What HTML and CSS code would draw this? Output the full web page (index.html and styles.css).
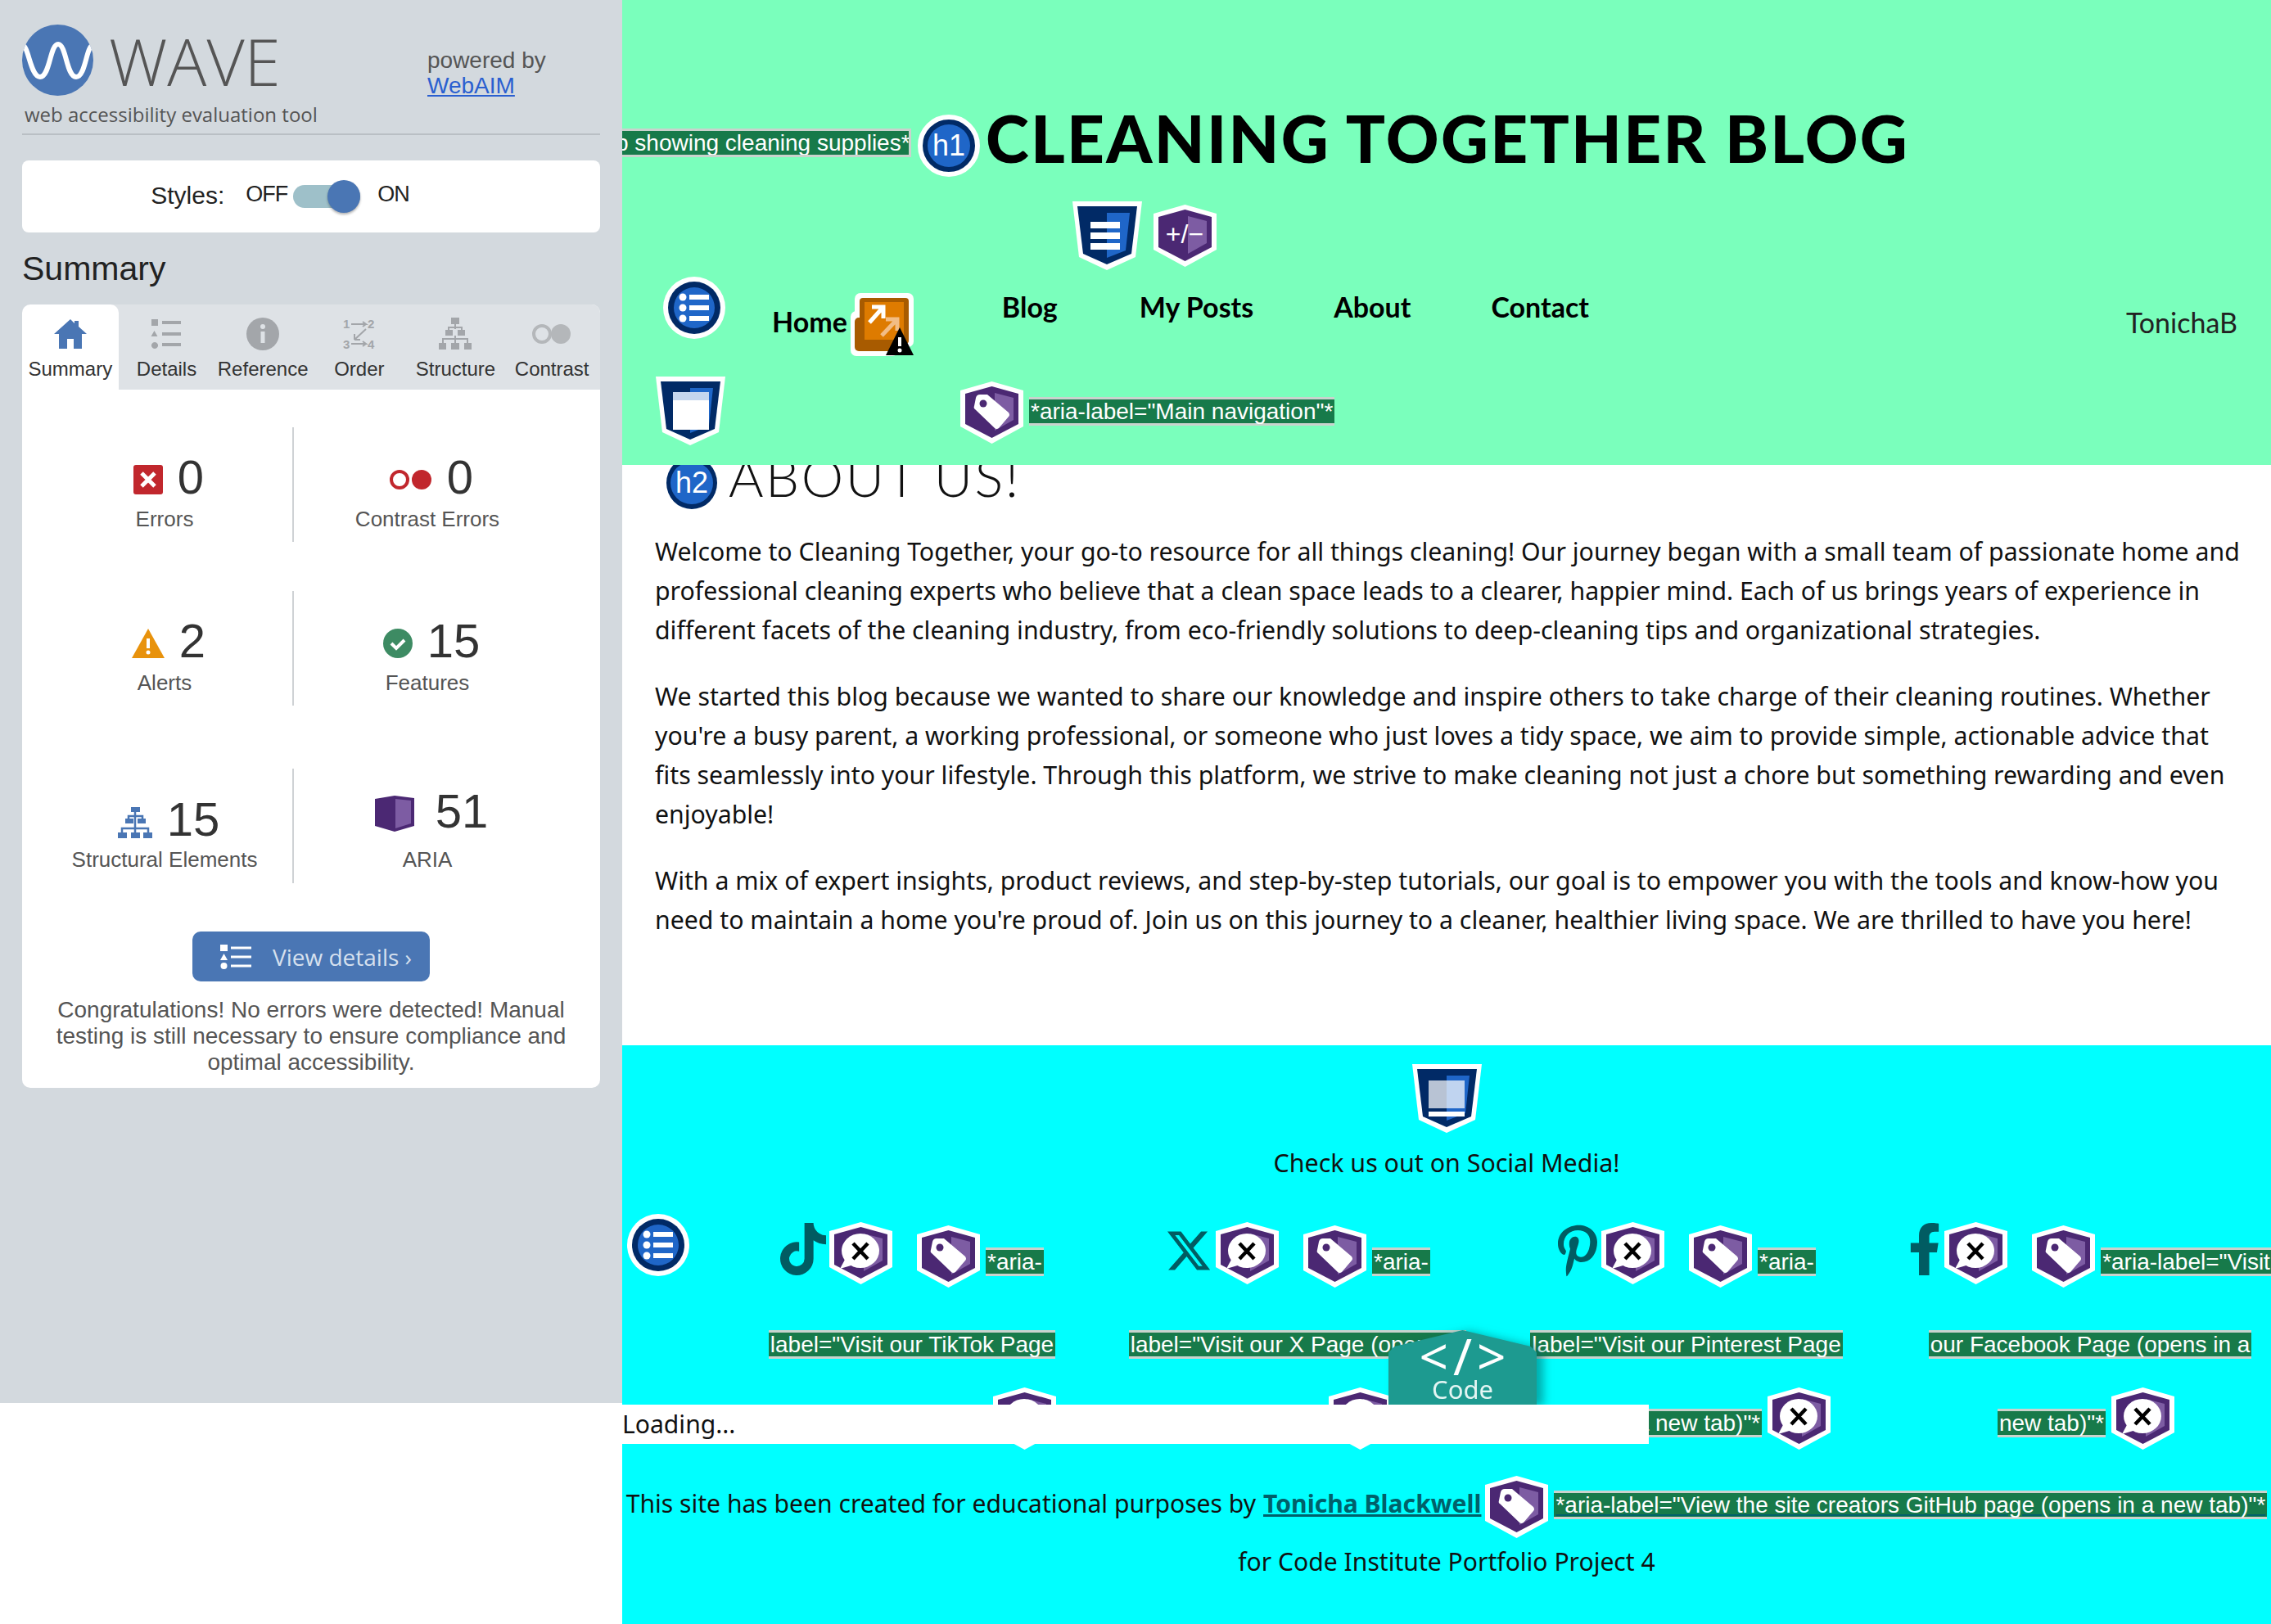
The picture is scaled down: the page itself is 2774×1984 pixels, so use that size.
FILE: index.html
```html
<!DOCTYPE html>
<html lang="en">
<head>
    <meta charset="UTF-8">
    <meta name="viewport" content="width=device-width, initial-scale=1.0">
    <title>About Us - Cleaning Together Blog</title>
    <link rel="stylesheet" href="styles.css">
</head>
<body>

    <!-- shared wave icons -->
    <svg class="icon-defs" aria-hidden="true">
        <symbol id="aria-base" viewBox="0 0 77 76">
            <polygon points="38.5,0 77,11 77,55 38.5,76 0,55 0,11" fill="#fff"/>
            <polygon points="38.5,6 71,15 71,52 38.5,69 6,52 6,15" fill="#4b2873"/>
            <polygon points="42,14 65,20 65,47 42,60" fill="#7d5ca3"/>
        </symbol>
        <symbol id="aria-bubble" viewBox="0 0 77 76">
            <use href="#aria-base"/>
            <ellipse cx="38" cy="35" rx="23" ry="21" fill="#fff"/>
            <polygon points="20,44 30,52 13,57" fill="#fff"/>
            <path d="M29 26l18 19M47 26L29 45" stroke="#000" stroke-width="4.5" fill="none"/>
        </symbol>
        <symbol id="aria-tag" viewBox="0 0 77 76">
            <use href="#aria-base"/>
            <path d="M19 20Q20 16 24 16H33L59 38Q61 41 59 43L47 57Q44 59 42 57L18 34Q16 33 17 30Z" fill="#fff"/>
            <circle cx="28" cy="27" r="4.500" fill="#4b2873"/>
        </symbol>
        <symbol id="list-circle" viewBox="0 0 76 76">
            <circle cx="38" cy="38" r="38" fill="#fff"/>
            <circle cx="38" cy="38" r="32" fill="#012a66"/>
            <circle cx="38" cy="38" r="25" fill="#1f66c8"/>
            <circle cx="24" cy="25" r="4.5" fill="#fff"/>
            <circle cx="24" cy="38" r="4.5" fill="#fff"/>
            <circle cx="24" cy="51" r="4.5" fill="#fff"/>
            <path d="M32 25h24M32 38h24M32 51h24" stroke="#fff" stroke-width="6"/>
        </symbol>
        <symbol id="region-base" viewBox="0 0 85 84">
            <polygon points="0,0 85,0 77,68 42,84 8,68" fill="#fff"/>
            <polygon points="6,6 79,6 72,64 42,77 13,64" fill="#012a66"/>
            <polygon points="42,14 70,14 65,60 42,69" fill="#1f66c8"/>
        </symbol>
    </svg>

    <div class="page">
        <aside class="wave-panel">
            <div class="wave-brand">
                <div class="wave-logo">
                    <svg class="wave-mark" viewBox="0 0 87 87">
                        <defs><clipPath id="logo-clip"><circle cx="43.500" cy="43.500" r="43.500"/></clipPath></defs>
                        <circle cx="43.500" cy="43.500" r="43.500" fill="#4a76b4"/>
                        <path clip-path="url(#logo-clip)" d="M0 25C8 25 10 64 22 64S34 24 44 24 54 64 66 64 78 25 87 25" stroke="#fff" stroke-width="6" fill="none"/>
                    </svg>
                    <span class="wave-name">WAVE</span>
                </div>
                <div class="wave-powered">powered by<br><a href="#">WebAIM</a></div>
            </div>
            <div class="wave-tagline">web accessibility evaluation tool</div>

            <div class="styles-card">
                <span class="styles-label">Styles:</span>
                <span class="styles-state">OFF</span>
                <span class="toggle"><span class="toggle-thumb"></span></span>
                <span class="styles-state">ON</span>
            </div>

            <h2 class="wave-heading">Summary</h2>

            <div class="summary-card">
                <div class="tabs">
                    <div class="tab tab-active">
                        <svg class="tab-icon" viewBox="0 0 40 40"><path d="M20 2L0 20h6v18h10V26h8v12h10V20h6L30 11V4h-5v3z" fill="#4a76b4"/></svg>
                        Summary
                    </div>
                    <div class="tab">
                        <svg class="tab-icon" viewBox="0 0 40 40"><path d="M2 2h8v8H2zM5.500 16l4 7h-8zM6 30a4 4 0 1 1-.01 0z" fill="#a3a6aa"/><path d="M15 6h23M15 20h23M15 33h23" stroke="#a3a6aa" stroke-width="4"/></svg>
                        Details
                    </div>
                    <div class="tab">
                        <svg class="tab-icon" viewBox="0 0 40 40"><circle cx="20" cy="20" r="20" fill="#a3a6aa"/><circle cx="20" cy="11" r="3" fill="#dee2e6"/><path d="M20 17v14" stroke="#dee2e6" stroke-width="5"/></svg>
                        Reference
                    </div>
                    <div class="tab">
                        <svg class="tab-icon" viewBox="0 0 40 40">
                            <text x="0" y="13" class="order-num">1</text>
                            <text x="30" y="13" class="order-num">2</text>
                            <text x="0" y="38" class="order-num">3</text>
                            <text x="30" y="38" class="order-num">4</text>
                            <path d="M10 8h18l-4-3M28 8l-4 3M10 32h18l-4-3M28 32l-4 3M28 14L14 27M14 27v-7M14 27h7" stroke="#a3a6aa" stroke-width="2" fill="none"/>
                        </svg>
                        Order
                    </div>
                    <div class="tab">
                        <svg class="tab-icon" viewBox="0 0 40 40"><path d="M15 0h10v8H15zM8 15h9v7H8zM23 15h9v7h-9zM0 31h9v8H0zM15 31h10v8H15zM31 31h9v8h-9z" fill="#a3a6aa"/><path d="M20 8v6M5 31v-5h30v5M20 22v9M12 15v-3h16v3" stroke="#a3a6aa" stroke-width="2" fill="none"/></svg>
                        Structure
                    </div>
                    <div class="tab">
                        <svg class="tab-icon tab-icon-wide" viewBox="0 0 50 40"><circle cx="13" cy="20" r="10" fill="none" stroke="#b4b7ba" stroke-width="4"/><circle cx="36" cy="20" r="12" fill="#b4b7ba"/></svg>
                        Contrast
                    </div>
                </div>

                <div class="stats">
                    <div class="stat stat-first">
                        <div class="stat-line">
                            <svg class="stat-icon" viewBox="0 0 36 36"><rect width="36" height="36" rx="3" fill="#c1272d"/><path d="M10 10l16 16M26 10L10 26" stroke="#fff" stroke-width="5"/></svg>
                            <span class="stat-num">0</span>
                        </div>
                        <div class="stat-label">Errors</div>
                    </div>
                    <div class="stat stat-first">
                        <div class="stat-line">
                            <svg class="stat-icon stat-icon-pair" viewBox="0 0 52 28"><circle cx="12" cy="14" r="10" fill="none" stroke="#c1272d" stroke-width="4"/><circle cx="39" cy="14" r="12" fill="#c1272d"/></svg>
                            <span class="stat-num">0</span>
                        </div>
                        <div class="stat-label">Contrast Errors</div>
                    </div>
                    <div class="stat stat-second">
                        <div class="stat-line">
                            <svg class="stat-icon stat-icon-alert" viewBox="0 0 40 36"><polygon points="20,0 40,36 0,36" fill="#e8920c"/><path d="M20 12v12" stroke="#fff" stroke-width="4"/><circle cx="20" cy="29" r="2.500" fill="#fff"/></svg>
                            <span class="stat-num">2</span>
                        </div>
                        <div class="stat-label">Alerts</div>
                    </div>
                    <div class="stat stat-second">
                        <div class="stat-line">
                            <svg class="stat-icon" viewBox="0 0 36 36"><circle cx="18" cy="18" r="18" fill="#3d8b63"/><path d="M10 18l6 6 10-10" stroke="#fff" stroke-width="4" fill="none"/></svg>
                            <span class="stat-num">15</span>
                        </div>
                        <div class="stat-label">Features</div>
                    </div>
                    <div class="stat stat-third">
                        <div class="stat-line stat-line-low">
                            <svg class="stat-icon stat-icon-tree" viewBox="0 0 42 38"><path d="M16 0h11v6H16zM9 14h10v6H9zM24 14h10v6H24zM0 31h11v7H0zM16 31h11v7H16zM31 31h11v7H31z" fill="#4a76b4"/><path d="M21 6v25M5 31v-5h32v5M13 14v-3h17v3" stroke="#4a76b4" stroke-width="2.500" fill="none"/></svg>
                            <span class="stat-num">15</span>
                        </div>
                        <div class="stat-label">Structural Elements</div>
                    </div>
                    <div class="stat stat-third">
                        <div class="stat-line">
                            <svg class="stat-icon stat-icon-box" viewBox="0 0 48 44"><polygon points="0,4 24,0 48,3 48,37 24,44 0,37" fill="#4b2873"/><polygon points="25,4 44,6 44,34 25,40" fill="#7d5ca3"/></svg>
                            <span class="stat-num">51</span>
                        </div>
                        <div class="stat-label">ARIA</div>
                    </div>
                </div>

                <a class="view-details" href="#">
                    <svg class="view-icon" viewBox="0 0 38 30"><rect width="9" height="8" fill="#fff"/><polygon points="4.500,11 9,19 0,19" fill="#fff"/><circle cx="4.500" cy="26" r="4" fill="#fff"/><path d="M13 4h25M13 15h25M13 26h25" stroke="#fff" stroke-width="3"/></svg>
                    View details ›
                </a>
                <p class="summary-note">Congratulations! No errors were detected! Manual testing is still necessary to ensure compliance and optimal accessibility.</p>
            </div>
        </aside>

        <main class="site">
            <header class="site-header">
                <div class="title-row">
                    <span class="tag tag-alt"><span>p showing cleaning supplies*</span></span>
                    <span class="heading-badge title-badge"><span>h1</span></span>
                    <h1 class="site-title">CLEANING TOGETHER BLOG</h1>
                </div>

                <div class="region-row">
                    <svg class="region-icon" viewBox="0 0 85 84">
                        <use href="#region-base"/>
                        <path d="M22 29h36M22 42h36M22 55h36" stroke="#fff" stroke-width="8"/>
                    </svg>
                    <svg class="aria-icon aria-plus" viewBox="0 0 77 76">
                        <use href="#aria-base"/>
                        <text x="38" y="47" class="plus-text">+/−</text>
                    </svg>
                </div>

                <nav class="main-nav">
                    <svg class="list-icon" viewBox="0 0 76 76"><use href="#list-circle"/></svg>
                    <div class="nav-home">
                        <a class="nav-link nav-link-home" href="#">Home</a>
                        <svg class="link-icon" viewBox="0 0 77 77">
                            <rect x="5" width="72" height="66" rx="7" fill="#fff"/>
                            <rect y="22" width="58" height="55" rx="7" fill="#fff"/>
                            <rect x="5" y="30" width="48" height="41" rx="5" fill="#a85b00"/>
                            <rect x="11" y="6" width="60" height="56" rx="4" fill="#a85b00"/>
                            <rect x="17" y="11" width="48" height="46" fill="#de7b00"/>
                            <path d="M23 36l17-19M26 17h14v14" stroke="#fff" stroke-width="5" fill="none"/>
                            <path d="M38 52l19-20M43 32h14v14" stroke="#f2bd85" stroke-width="5" fill="none"/>
                            <polygon points="60,42 77,76 43,76" fill="#000"/>
                            <path d="M60 54v11" stroke="#fff" stroke-width="4"/>
                            <circle cx="60" cy="70" r="2.500" fill="#fff"/>
                        </svg>
                    </div>
                    <a class="nav-link nav-link-blog" href="#">Blog</a>
                    <a class="nav-link nav-link-posts" href="#">My Posts</a>
                    <a class="nav-link nav-link-about" href="#">About</a>
                    <a class="nav-link nav-link-contact" href="#">Contact</a>
                    <span class="nav-user">TonichaB</span>
                </nav>

                <div class="nav-labels">
                    <svg class="region-icon" viewBox="0 0 85 84">
                        <use href="#region-base"/>
                        <rect x="21" y="19" width="44" height="10" fill="#c5d6ee"/>
                        <rect x="21" y="29" width="44" height="36" fill="#fff"/>
                    </svg>
                    <svg class="aria-icon aria-nav" viewBox="0 0 77 76"><use href="#aria-tag"/></svg>
                    <span class="tag tag-nav">*aria-label="Main navigation"*</span>
                </div>
            </header>

            <section class="about">
                <div class="about-heading">
                    <span class="heading-badge about-badge"><span>h2</span></span>
                    <h2 class="about-title">ABOUT US!</h2>
                </div>
                <p>Welcome to Cleaning Together, your go-to resource for all things cleaning! Our journey began with a small team of passionate home and professional cleaning experts who believe that a clean space leads to a clearer, happier mind. Each of us brings years of experience in different facets of the cleaning industry, from eco-friendly solutions to deep-cleaning tips and organizational strategies.</p>
                <p>We started this blog because we wanted to share our knowledge and inspire others to take charge of their cleaning routines. Whether you're a busy parent, a working professional, or someone who just loves a tidy space, we aim to provide simple, actionable advice that fits seamlessly into your lifestyle. Through this platform, we strive to make cleaning not just a chore but something rewarding and even enjoyable!</p>
                <p>With a mix of expert insights, product reviews, and step-by-step tutorials, our goal is to empower you with the tools and know-how you need to maintain a home you're proud of. Join us on this journey to a cleaner, healthier living space. We are thrilled to have you here!</p>
            </section>

            <footer class="site-footer">
                <svg class="region-icon footer-region" viewBox="0 0 85 84">
                    <use href="#region-base"/>
                    <rect x="20" y="20" width="44" height="34" fill="#fff" opacity="0.72"/>
                    <rect x="20" y="58" width="44" height="6" fill="#fff"/>
                </svg>
                <p class="social-intro">Check us out on Social Media!</p>

                <div class="social-grid">
                    <svg class="list-icon social-list" viewBox="0 0 76 76"><use href="#list-circle"/></svg>

                    <div class="social-col">
                        <div class="social-top">
                            <svg class="social-logo logo-tiktok" viewBox="0 0 448 512"><path d="M448 209.910a210.060 210.060 0 0 1-122.770-39.250V349.380A162.550 162.550 0 1 1 185 188.310V278.200a74.620 74.620 0 1 0 52.230 71.180V0l88 0a121.180 121.180 0 0 0 1.860 22.170h0A122.180 122.180 0 0 0 381 102.390a121.430 121.430 0 0 0 67 20.140Z"/></svg>
                            <svg class="aria-icon bubble-top" viewBox="0 0 77 76"><use href="#aria-bubble"/></svg>
                            <svg class="aria-icon tag-top" viewBox="0 0 77 76"><use href="#aria-tag"/></svg>
                            <span class="tag tag-top-text">*aria-</span>
                        </div>
                        <span class="tag tag-middle">label="Visit our TikTok Page</span>
                        <div class="social-bottom">
                            <span class="tag tag-bottom">(opens in a new tab)"*</span>
                            <svg class="aria-icon" viewBox="0 0 77 76"><use href="#aria-bubble"/></svg>
                        </div>
                    </div>

                    <div class="social-col">
                        <div class="social-top">
                            <svg class="social-logo logo-x" viewBox="0 0 512 512"><path d="M389.200 48h70.600L305.600 224.200 487 464H345L233.700 318.600 106.500 464H35.800L200.700 275.500 26.800 48H172.400L272.900 180.900 389.200 48zM364.400 421.800h39.100L151.100 88h-42L364.400 421.800z"/></svg>
                            <svg class="aria-icon bubble-top" viewBox="0 0 77 76"><use href="#aria-bubble"/></svg>
                            <svg class="aria-icon tag-top" viewBox="0 0 77 76"><use href="#aria-tag"/></svg>
                            <span class="tag tag-top-text">*aria-</span>
                        </div>
                        <span class="tag tag-middle">label="Visit our X Page (opens in</span>
                        <div class="social-bottom">
                            <span class="tag tag-bottom">a new tab)"*</span>
                            <svg class="aria-icon" viewBox="0 0 77 76"><use href="#aria-bubble"/></svg>
                        </div>
                    </div>

                    <div class="social-col">
                        <div class="social-top">
                            <svg class="social-logo logo-pinterest" viewBox="0 0 384 512"><path d="M204 6.500C101.400 6.500 0 74.900 0 185.600 0 256 39.600 296 63.600 296c9.900 0 15.600-27.600 15.600-35.400 0-9.300-23.700-29.100-23.700-67.800 0-80.400 61.200-137.400 140.400-137.400 68.100 0 118.500 38.700 118.500 109.800 0 53.100-21.300 152.700-90.300 152.700-24.900 0-46.200-18-46.200-43.800 0-37.800 26.400-74.400 26.400-113.400 0-66.200-93.900-54.200-93.900 25.800 0 16.800 2.100 35.400 9.600 50.700-13.800 59.400-42 147.900-42 209.100 0 18.900 2.700 37.500 4.500 56.400 3.400 3.800 1.700 3.400 6.900 1.500 50.400-69 48.600-82.500 71.400-172.800 12.300 23.400 44.100 36 69.300 36 106.200 0 153.900-103.500 153.900-196.800C384 71.300 298.200 6.500 204 6.500z"/></svg>
                            <svg class="aria-icon bubble-top" viewBox="0 0 77 76"><use href="#aria-bubble"/></svg>
                            <svg class="aria-icon tag-top" viewBox="0 0 77 76"><use href="#aria-tag"/></svg>
                            <span class="tag tag-top-text">*aria-</span>
                        </div>
                        <span class="tag tag-middle">label="Visit our Pinterest Page</span>
                        <div class="social-bottom">
                            <span class="tag tag-bottom">(opens in a new tab)"*</span>
                            <svg class="aria-icon" viewBox="0 0 77 76"><use href="#aria-bubble"/></svg>
                        </div>
                    </div>

                    <div class="social-col social-col-last">
                        <div class="social-top">
                            <svg class="social-logo logo-facebook" viewBox="0 0 320 512"><path d="M279.140 288l14.220-92.660h-88.910v-60.130c0-25.350 12.420-50.060 52.240-50.060h40.420V6.260S260.430 0 225.360 0c-73.220 0-121.080 44.380-121.080 124.720v70.620H22.890V288h81.390v224h100.170V288z"/></svg>
                            <svg class="aria-icon bubble-top" viewBox="0 0 77 76"><use href="#aria-bubble"/></svg>
                            <svg class="aria-icon tag-top" viewBox="0 0 77 76"><use href="#aria-tag"/></svg>
                            <span class="tag tag-top-text">*aria-label="Visit</span>
                        </div>
                        <span class="tag tag-middle">our Facebook Page (opens in a</span>
                        <div class="social-bottom">
                            <span class="tag tag-bottom">new tab)"*</span>
                            <svg class="aria-icon" viewBox="0 0 77 76"><use href="#aria-bubble"/></svg>
                        </div>
                    </div>
                </div>

                <div class="credit">
                    <span>This site has been created for educational purposes by</span>
                    <a class="credit-link" href="#">Tonicha Blackwell</a>
                    <svg class="aria-icon" viewBox="0 0 77 76"><use href="#aria-tag"/></svg>
                    <span class="tag tag-credit">*aria-label="View the site creators GitHub page (opens in a new tab)"*</span>
                </div>
                <p class="credit-project">for Code Institute Portfolio Project 4</p>

                <!-- overlays on top of the footer content -->
                <div class="code-badge">
                    <div class="code-shape">
                        <span class="code-mark">&lt;/&gt;</span>
                        <span class="code-word">Code</span>
                    </div>
                </div>
                <div class="loading-bar">Loading...</div>
            </footer>
        </main>
    </div>

</body>
</html>
```

FILE: styles.css
```css
* {
    box-sizing: border-box;
}

html, body {
    margin: 0;
    height: 1984px;
    overflow: hidden;
    background-color: #fff;
}

body {
    font-family: 'Noto Sans', sans-serif;
    font-size: 30.1px;
    line-height: 48px;
    color: #111;
}

.icon-defs {
    display: none;
}

.page {
    display: flex;
    width: 2774px;
    height: 1984px;
}

/* wave sidebar */
.wave-panel {
    flex: 0 0 760px;
    height: 1714px;
    padding: 30px 27px 0;
    background-color: #d3d9de;
    font-family: 'Liberation Sans', Arial, sans-serif;
    color: #222;
}

.wave-brand {
    display: flex;
    height: 92px;
}

.wave-logo {
    display: flex;
    width: 495px;
}

.wave-mark {
    width: 87px;
    height: 87px;
}

.wave-name {
    margin-left: 19px;
    font-family: 'Open Sans', sans-serif;
    font-weight: 300;
    font-size: 80px;
    line-height: 88px;
    color: #555;
}

.wave-powered {
    padding-top: 28px;
    font-size: 28px;
    line-height: 31px;
    color: #555;
}

.wave-powered a {
    color: #2a5fd0;
}

.wave-tagline {
    height: 43px;
    padding-left: 3px;
    border-bottom: 2px solid #b9bfc4;
    font-family: 'Open Sans', sans-serif;
    font-size: 24px;
    line-height: 36px;
    color: #555;
}

.styles-card {
    display: flex;
    align-items: center;
    justify-content: center;
    height: 88px;
    margin-top: 31px;
    padding-right: 76px;
    gap: 7px;
    background-color: #fff;
    border-radius: 8px;
    font-size: 27px;
}

.styles-label {
    margin: -2px 19px 0 0;
    font-size: 30px;
}

.styles-state {
    letter-spacing: -1px;
    margin-top: -6px;
}

.toggle {
    position: relative;
    width: 82px;
    height: 28px;
    margin: 0 14px 0 0;
    background-color: #9ec0c9;
    border-radius: 14px;
}

.toggle-thumb {
    position: absolute;
    top: -6px;
    right: 0;
    width: 40px;
    height: 40px;
    background-color: #4a76b4;
    border-radius: 50%;
    box-shadow: 0 2px 3px rgba(0, 0, 0, 0.3);
}

.wave-heading {
    margin: 21px 0 21px;
    font-size: 41px;
    line-height: 46px;
    font-weight: normal;
}

.summary-card {
    height: 957px;
    background-color: #fff;
    border-radius: 10px;
    overflow: hidden;
}

.tabs {
    display: grid;
    grid-template-columns: repeat(6, 1fr);
    height: 104px;
    background-color: #dee2e6;
}

.tab {
    display: flex;
    flex-direction: column;
    align-items: center;
    padding-top: 16px;
    font-size: 24px;
    line-height: 30px;
    color: #333;
}

.tab-active {
    background-color: #fff;
    border-radius: 10px 10px 0 0;
}

.tab-icon {
    width: 40px;
    height: 40px;
    margin-bottom: 8px;
}

.tab-icon-wide {
    width: 50px;
}

.order-num {
    font: bold 15px 'Liberation Sans', sans-serif;
    fill: #a3a6aa;
}

.stats {
    display: grid;
    grid-template-columns: 314px 326px;
    padding: 46px 0 0 18px;
}

.stat {
    display: flex;
    flex-direction: column;
    align-items: center;
    height: 140px;
}

.stat:nth-child(odd) {
    border-right: 2px solid #cfd2d5;
}

.stat-first {
    margin-bottom: 60px;
}

.stat-second {
    margin-bottom: 77px;
}

.stat-line {
    display: flex;
    align-items: center;
    height: 70px;
    margin: 26px 0 0 10px;
    gap: 18px;
}

.stat-third .stat-line {
    margin-top: 17px;
    height: 70px;
}

.stat-third .stat-line-low {
    margin-top: 27px;
    height: 70px;
    margin-bottom: -10px;
}

.stat-num {
    font-size: 58px;
    line-height: 70px;
    color: #333;
}

.stat-icon {
    width: 36px;
    height: 36px;
    margin-top: 6px;
}

.stat-icon-pair {
    width: 52px;
    height: 28px;
}

.stat-icon-alert {
    width: 40px;
}

.stat-icon-tree {
    width: 42px;
    height: 38px;
    margin-top: 8px;
}

.stat-icon-box {
    width: 48px;
    height: 44px;
    margin-right: 8px;
}

.stat-label {
    font-size: 26px;
    line-height: 30px;
    margin-top: 1px;
    color: #555;
}

.stat-third .stat-label {
    margin-top: 9px;
}

.view-details {
    display: flex;
    align-items: center;
    width: 290px;
    height: 61px;
    margin: 59px auto 0;
    padding-left: 34px;
    gap: 26px;
    background-color: #4a76b4;
    border-radius: 10px;
    font-family: 'Open Sans', sans-serif;
    font-size: 28px;
    color: #d6e0ee;
    text-decoration: none;
}

.view-icon {
    width: 38px;
    height: 30px;
}

.summary-note {
    margin: 19px 0 0;
    padding: 0 20px;
    text-align: center;
    font-size: 28px;
    line-height: 32px;
    color: #555;
}

/* the site itself */
.site {
    flex: 0 0 2014px;
    min-width: 0;
    height: 1984px;
    overflow: hidden;
}

.site-header {
    position: relative;
    z-index: 1;
    height: 568px;
    padding-top: 130px;
    background-color: #7affbc;
}

.title-row {
    display: flex;
    align-items: flex-start;
    height: 86px;
}

.tag {
    display: inline-block;
    height: 35px;
    padding: 0 2px;
    background-color: #177a4a;
    border-top: 3px solid #c9d3cd;
    border-bottom: 3px solid #c9d3cd;
    font-family: 'Liberation Sans', Arial, sans-serif;
    font-size: 28px;
    line-height: 29px;
    color: #fff;
    white-space: nowrap;
}

.tag-alt {
    display: flex;
    justify-content: flex-start;
    flex: 0 0 353px;
    margin-top: 27px;
    padding-left: 0;
    overflow: hidden;
    border-right: 3px solid #c9d3cd;
}

.tag-alt span {
    margin-left: -8px;
}

.heading-badge {
    display: flex;
    align-items: center;
    justify-content: center;
    width: 76px;
    height: 76px;
    background-color: #012a66;
    border: 6px solid #fff;
    border-radius: 50%;
    font-family: 'Liberation Sans', Arial, sans-serif;
    font-size: 36px;
    color: #fff;
}

.heading-badge span {
    display: flex;
    align-items: center;
    justify-content: center;
    width: 52px;
    height: 52px;
    background-color: #1f66c8;
    border-radius: 50%;
}

.title-badge {
    flex: none;
    margin: 10px 7px 0 8px;
}

.site-title {
    margin: -2px 0 0;
    font-family: Lato, sans-serif;
    font-weight: 900;
    font-size: 80px;
    line-height: 80px;
    letter-spacing: 2.3px;
    color: #000;
    white-space: nowrap;
}

.region-row {
    display: flex;
    align-items: flex-start;
    gap: 14px;
    margin-top: 30px;
    padding-left: 550px;
}

.region-icon {
    flex: none;
    width: 85px;
    height: 84px;
}

.aria-icon {
    flex: none;
    width: 77px;
    height: 76px;
}

.aria-plus {
    margin-top: 4px;
}

.plus-text {
    font: 32px 'Liberation Sans', sans-serif;
    fill: #fff;
    text-anchor: middle;
}

.main-nav {
    display: flex;
    align-items: flex-start;
    height: 122px;
    margin-top: 8px;
    padding: 0 41px 0 50px;
}

.list-icon {
    flex: none;
    width: 76px;
    height: 76px;
}

.nav-home {
    display: flex;
    align-items: flex-start;
    margin-left: 57px;
}

.nav-link {
    font-family: Lato, sans-serif;
    font-weight: 700;
    font-size: 34px;
    color: #000;
    text-decoration: none;
}

.nav-link-home {
    margin: 31px 4px 0 0;
}

.link-icon {
    width: 77px;
    height: 77px;
    margin-top: 20px;
}

.nav-link-blog {
    margin: 13px 0 0 108px;
}

.nav-link-posts {
    margin: 13px 0 0 100px;
}

.nav-link-about {
    margin: 13px 0 0 98px;
}

.nav-link-contact {
    margin: 13px 0 0 98px;
}

.nav-user {
    margin: 32px 0 0 auto;
    font-family: Lato, sans-serif;
    font-size: 34px;
    color: #222;
}

.nav-labels {
    display: flex;
    align-items: flex-start;
    padding-left: 41px;
}

.aria-nav {
    margin: 6px 7px 0 287px;
}

.tag-nav {
    margin-top: 25px;
}

.about {
    display: flow-root;
    height: 709px;
    padding: 0 34px 0 40px;
    font-size: 30.25px;
}

.about-heading {
    display: flex;
    align-items: flex-start;
    height: 98px;
    margin-top: -16px;
    padding-left: 8px;
}

.about-badge {
    flex: none;
    width: 74px;
}

.about-title {
    margin: -2px 0 0 8px;
    font-family: Lato, sans-serif;
    font-weight: 300;
    font-size: 65px;
    line-height: 64px;
    letter-spacing: 2.5px;
}

.about p {
    margin: 0 0 33px;
}

.site-footer {
    position: relative;
    display: flex;
    flex-direction: column;
    align-items: center;
    height: 707px;
    padding-top: 23px;
    background-color: #0ff;
}

.footer-region {
    display: block;
}

.social-intro {
    margin: 13px 0 0;
    font-size: 30.4px;
}

.social-grid {
    display: grid;
    grid-template-columns: 120px 468px 474px 476px 476px;
    width: 100%;
    margin-top: 48px;
}

.social-list {
    margin: -10px 0 0 6px;
}

.social-col {
    display: flex;
    flex-direction: column;
    align-items: center;
    min-width: 0;
}

.social-col-last {
    padding-left: 34px;
}

.social-top {
    display: flex;
    align-items: flex-start;
    height: 82px;
    white-space: nowrap;
}

.social-logo {
    flex: none;
    height: 64px;
    margin-top: 1px;
    fill: #015c62;
}

.logo-tiktok {
    width: 56px;
}

.logo-x {
    width: 58px;
    height: 58px;
    margin-top: 6px;
}

.logo-pinterest {
    width: 50px;
    margin-top: 3px;
}

.logo-facebook {
    width: 40px;
}

.bubble-top {
    margin-left: 4px;
}

.tag-top {
    margin: 4px 7px 0 30px;
}

.tag-top-text {
    margin-top: 31px;
}

.tag-middle {
    margin-top: 50px;
}

.social-bottom {
    display: flex;
    align-items: flex-start;
    gap: 7px;
    margin: 35px 0 0 -10px;
}

.tag-bottom {
    margin-top: 26px;
}

.credit {
    display: flex;
    align-items: flex-start;
    margin-top: 32px;
    white-space: nowrap;
}

.credit > span:first-child {
    margin-top: 10px;
}

.credit-link {
    margin: 10px 5px 0 9px;
    font-weight: 700;
    color: #00606a;
    text-decoration-thickness: 3px;
}

.tag-credit {
    margin: 18px 0 0 7px;
    text-decoration: underline;
    text-decoration-color: #00606a;
}

.credit-project {
    margin: 5px 0 0;
}

/* overlays */
.code-badge {
    position: absolute;
    top: 348px;
    left: 936px;
    width: 181px;
    height: 91px;
    filter: drop-shadow(8px 2px 6px rgba(0, 100, 100, 0.55));
}

.code-shape {
    display: flex;
    flex-direction: column;
    align-items: center;
    height: 100%;
    padding-top: 3px;
    background-color: #1d9a90;
    clip-path: polygon(50% 0, 96% 22%, 100% 30%, 100% 100%, 0 100%, 0 30%, 4% 22%);
    color: #fff;
}

.code-mark {
    margin-left: 6px;
    font-size: 62px;
    line-height: 56px;
    letter-spacing: 6px;
}

.code-word {
    margin-top: -3px;
    font-size: 31px;
    line-height: 32px;
    color: #e3f5f3;
}

.loading-bar {
    position: absolute;
    top: 439px;
    left: 0;
    width: 1254px;
    height: 48px;
    background-color: #fff;
}
```
